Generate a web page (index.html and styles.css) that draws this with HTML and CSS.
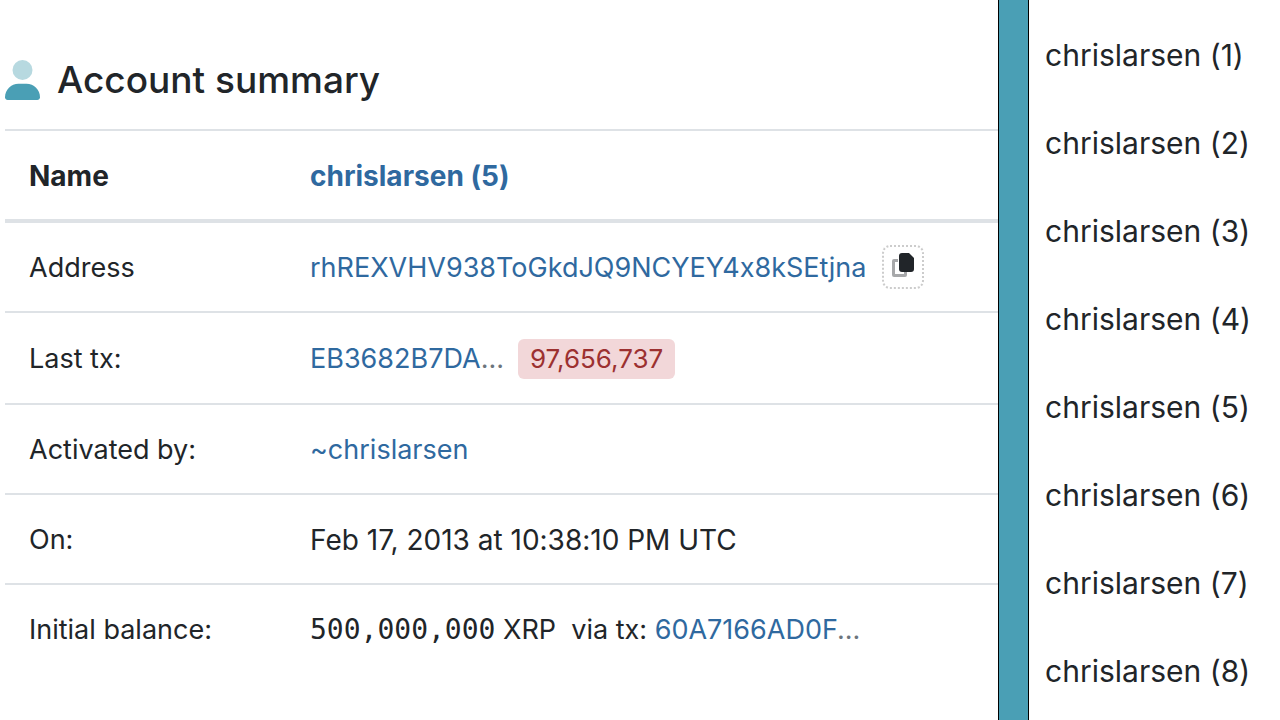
FILE: index.html
```html
<!DOCTYPE html>
<html lang="en">
<head>
    <meta charset="UTF-8" />
    <meta name="viewport" content="width=device-width, initial-scale=1.0" />
    <title>Account summary</title>
    <link rel="stylesheet" href="styles.css">
</head>
<body>
    <div class="layout">
        <main class="summary">
            <h1 class="title">
                <svg class="user-icon" viewBox="0 0 448 512" aria-hidden="true">
                    <circle cx="224" cy="128" r="128" fill="#b7d9e0" />
                    <path fill="#4a9fb5" d="M274.7 304H173.300C77.600 304 0 381.600 0 477.300 0 496.500 15.500 512 34.700 512h378.600c19.200 0 34.700-15.500 34.700-34.700C448 381.600 370.400 304 274.700 304z" />
                </svg>
                Account summary
            </h1>
            <table class="details">
                <thead>
                    <tr>
                        <th scope="col">Name</th>
                        <th scope="col"><a href="#">chrislarsen (5)</a></th>
                    </tr>
                </thead>
                <tbody>
                    <tr>
                        <td>Address</td>
                        <td>
                            <div class="line">
                                <a href="#">rhREXVHV938ToGkdJQ9NCYEY4x8kSEtjna</a>
                                <button class="copy" type="button" aria-label="Copy address">
                                    <svg viewBox="0 0 22 24" aria-hidden="true">
                                        <path fill="#a7a8aa" d="M2 6h4v3H3v12h9v-2h3v3q0 2-2 2H2q-2 0-2-2V8q0-2 2-2z" />
                                        <path fill="#212529" d="M10 0h7l5 5v11q0 3-3 3h-9q-3 0-3-3V3q0-3 3-3z" />
                                    </svg>
                                </button>
                            </div>
                        </td>
                    </tr>
                    <tr>
                        <td>Last tx:</td>
                        <td>
                            <div class="line tx">
                                <span><a href="#">EB3682B7DA</a><span class="dots">...</span></span>
                                <span class="badge">97,656,737</span>
                            </div>
                        </td>
                    </tr>
                    <tr>
                        <td>Activated by:</td>
                        <td><a href="#">~chrislarsen</a></td>
                    </tr>
                    <tr>
                        <td>On:</td>
                        <td class="date">Feb 17, 2013 at 10:38:10 PM UTC</td>
                    </tr>
                    <tr>
                        <td>Initial balance:</td>
                        <td><span class="amount">500,000,000</span> XRP &nbsp;via tx: <a href="#">60A7166AD0F</a><span class="dots">...</span></td>
                    </tr>
                </tbody>
            </table>
        </main>
        <div class="divider"></div>
        <aside class="names">
            <ul>
                <li>chrislarsen (1)</li>
                <li>chrislarsen (2)</li>
                <li>chrislarsen (3)</li>
                <li>chrislarsen (4)</li>
                <li>chrislarsen (5)</li>
                <li>chrislarsen (6)</li>
                <li>chrislarsen (7)</li>
                <li>chrislarsen (8)</li>
            </ul>
        </aside>
    </div>
</body>
</html>
```
FILE: styles.css
```css
body {
    margin: 0;
    background-color: #fff;
    color: #212529;
    font-family: Inter, "Liberation Sans", sans-serif;
    font-size: 27px;
    line-height: 42px;
    font-variant-ligatures: no-contextual;
}

a {
    color: #2f699f;
    text-decoration: none;
}

.layout {
    display: flex;
    min-height: 100vh;
}

.summary {
    flex: 1;
    min-width: 0;
    padding-left: 5px;
}

.title {
    display: flex;
    align-items: center;
    gap: 17px;
    margin: 0;
    padding: 56px 0 25px;
    font-size: 37px;
    font-weight: 500;
    line-height: 48px;
}

.user-icon {
    width: 35px;
    height: 40px;
}

.details {
    width: 100%;
    border-spacing: 0;
    border-top: 2px solid #dee2e6;
}

.details th,
.details td {
    padding: 24px 0 22px 24px;
    border-bottom: 2px solid #dee2e6;
    text-align: left;
    white-space: nowrap;
}

.details th {
    border-bottom-width: 4px;
    font-size: 28px;
    font-weight: 700;
}

.details th:first-child {
    width: 257px;
}

.details tbody tr:last-child td {
    border-bottom: 0;
}

.details .date {
    font-size: 28px;
}

.line {
    display: flex;
    align-items: center;
    gap: 16px;
}

.line.tx {
    gap: 14px;
    min-height: 44px;
}

.copy {
    display: flex;
    align-items: center;
    justify-content: center;
    width: 42px;
    height: 44px;
    margin: -2px 0 0;
    padding: 0 0 4px;
    border: 2px dotted #ccc;
    border-radius: 8px;
    background: none;
    cursor: pointer;
}

.copy svg {
    width: 22px;
    height: 24px;
}

.dots {
    color: #6c757d;
}

.badge {
    padding: 0 12px;
    border-radius: 6px;
    background-color: #f2d7d9;
    color: #9c3030;
    font-size: 26px;
    line-height: 40px;
}

.amount {
    font-family: "DejaVu Sans Mono", monospace;
    font-size: 28px;
}

.divider {
    width: 29px;
    border: solid #000;
    border-width: 0 1px;
    background-color: #4a9fb5;
}

.names ul {
    margin: 0;
    padding: 11px 29px 0 16px;
    list-style: none;
}

.names li {
    font-size: 30px;
    line-height: 88px;
    white-space: nowrap;
}
```
